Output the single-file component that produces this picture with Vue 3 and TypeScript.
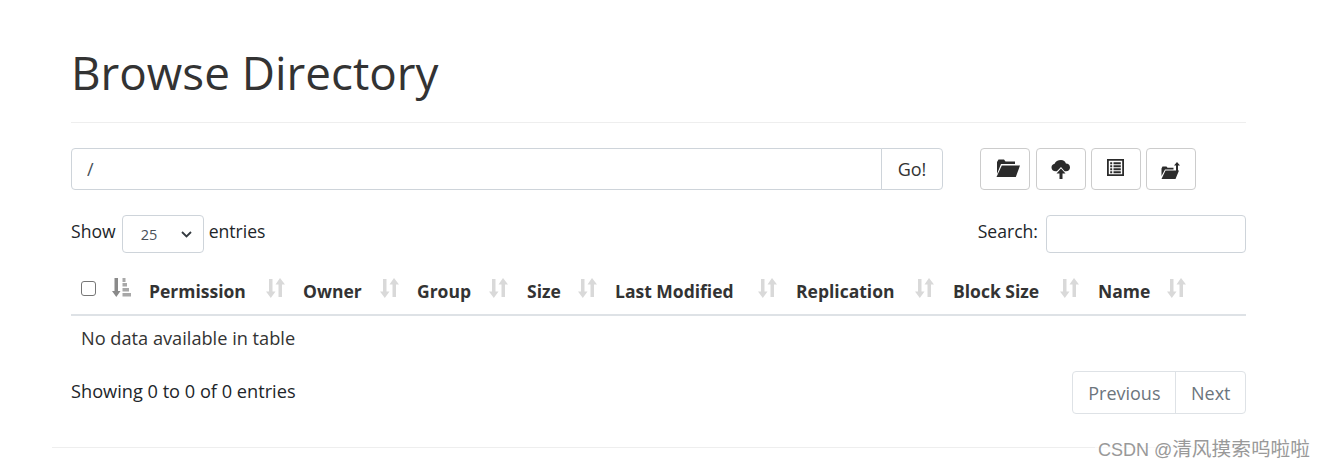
<template>
  <div class="page">
    <div class="content">
      <h1 class="title">Browse Directory</h1>
      <hr class="rule" />

      <div class="toolbar">
        <div class="path-group">
          <input class="path-input" type="text" value="/" />
          <button class="go">Go!</button>
        </div>
        <div class="actions">
          <button class="icon-btn" v-for="a in actions" :key="a.name" :title="a.name">
            <svg :class="a.cls" :width="a.w" :height="a.h" :viewBox="`0 0 ${a.w} ${a.h}`">
              <path v-for="(d, i) in a.paths" :key="i" :d="d" fill="#2b2b2b" fill-rule="evenodd" />
            </svg>
          </button>
        </div>
      </div>

      <div class="filters">
        <label class="length">
          <span>Show</span>
          <span class="select">
            <span class="select-value">25</span>
            <svg width="11" height="7" viewBox="0 0 11 7">
              <path d="M1 1l4.500 4.500L10 1" fill="none" stroke="#343a40" stroke-width="1.800" />
            </svg>
          </span>
          <span>entries</span>
        </label>
        <label class="search">
          <span>Search:</span>
          <input class="search-input" type="text" />
        </label>
      </div>

      <table class="table">
        <thead>
          <tr>
            <th class="check-col">
              <span class="checkbox"></span>
              <svg class="sort active" width="19" height="19" viewBox="0 0 19 19">
                <path d="M2.500 0h3.500v13h2.500L4.300 19 0 13h2.500z" fill="#8a8a8a" />
                <path d="M10.500 0h3v4h-3zM10.500 5h4.500v3.500h-4.500zM10.500 10h6.500v3.500h-6.500zM10.500 15h8.500v3.500h-8.500z" fill="#a8a8a8" />
              </svg>
            </th>
            <th v-for="c in columns" :key="c.label" :style="{ width: c.width ? c.width + 'px' : 'auto' }">
              <span class="th-inner">
                <span>{{ c.label }}</span>
                <svg class="sort" :style="{ marginLeft: c.gap + 'px' }" width="19" height="20" viewBox="0 0 19 20">
                  <path d="M3 1h3.500v12.500h3L4.800 20 0 13.500h3zM14 0l5 6.500h-3V19h-3.500V6.500h-3z" fill="#d9d9d9" />
                </svg>
              </span>
            </th>
          </tr>
        </thead>
        <tbody>
          <tr>
            <td class="empty" :colspan="columns.length + 1">No data available in table</td>
          </tr>
        </tbody>
      </table>

      <div class="table-foot">
        <span class="info">Showing 0 to 0 of 0 entries</span>
        <div class="pager">
          <span class="page-link">Previous</span>
          <span class="page-link">Next</span>
        </div>
      </div>
    </div>

    <hr class="bottom-rule" />
    <span class="watermark">CSDN @<span class="watermark-name">清风摸索呜啦啦</span></span>
  </div>
</template>

<script setup lang="ts">
interface Column {
  label: string
  width: number
  gap: number
}

interface Action {
  name: string
  cls: string
  w: number
  h: number
  paths: string[]
}

const columns: Column[] = [
  { label: "Permission", width: 154, gap: 20 },
  { label: "Owner", width: 114, gap: 18 },
  { label: "Group", width: 110, gap: 18 },
  { label: "Size", width: 88, gap: 17 },
  { label: "Last Modified", width: 181, gap: 24 },
  { label: "Replication", width: 157, gap: 20 },
  { label: "Block Size", width: 145, gap: 21 },
  { label: "Name", width: 0, gap: 17 }
]

const actions: Action[] = [
  {
    name: "Create directory",
    cls: "icon-folder",
    w: 24,
    h: 18,
    paths: [
      "M1 3 2.500 .5h5.500l1.500 2h9.500v2.500H5L1 15z",
      "M5.800 6.500H24L19.800 18H.5z"
    ]
  },
  {
    name: "Upload files",
    cls: "",
    w: 20,
    h: 20,
    paths: [
      "M10 1c2.600 0 4.300 1.500 4.900 3.500 2.400 0 4.100 1.700 4.100 3.900 0 2.100-1.700 3.800-3.900 3.800h-1.500L10 8 5.900 12.200H4.500C2.200 12.200.5 10.500.5 8.400c0-1.900 1.300-3.400 3.100-3.700C4.300 2.500 6.900 1 10 1z",
      "M10 9.500l4.500 5h-3V20h-3v-5.500h-3z"
    ]
  },
  {
    name: "Cut / paste",
    cls: "icon-list",
    w: 17,
    h: 17,
    paths: [
      "M0 0h17v17H0zM1.800 1.800v13.400h13.400V1.800z",
      "M3.200 3.200h2v2h-2zM6.500 3.200h7.300v2H6.500zM3.200 6.200h2v2h-2zM6.500 6.200h7.300v2H6.500zM3.200 9.200h2v2h-2zM6.500 9.200h7.300v2H6.500zM3.200 12.200h2v2h-2zM6.500 12.200h7.300v2H6.500z"
    ]
  },
  {
    name: "Parent directory",
    cls: "icon-up",
    w: 20,
    h: 17,
    paths: [
      "M.5 6.500l1-2h4l1 1.300h6v1.700H4L.5 14z",
      "M4.500 8.500h13.500L14.500 17H.5z",
      "M16 0l3 3.500h-2v6h-2v-6h-2z"
    ]
  }
]
</script>

<style>
html,
body {
  background: #fff;
}
</style>

<style scoped>
.page {
  position: relative;
  width: 1325px;
  height: 468px;
  overflow: hidden;
  font-family: "Open Sans", "Noto Sans", sans-serif;
  font-size: 18px;
  color: #212529;
  box-sizing: border-box;
}

.content {
  width: 1175px;
  margin-left: 71px;
}

.title {
  margin: 0;
  padding-top: 40px;
  font-size: 45.800px;
  line-height: 65px;
  font-weight: 400;
  color: #333;
}

.rule {
  margin: 17px 0 25px;
  border: 0;
  border-top: 1px solid #eee;
}

.toolbar {
  display: flex;
  align-items: flex-start;
}

.path-group {
  display: flex;
  width: 872px;
  height: 42px;
}

.path-input {
  flex: 1;
  min-width: 0;
  box-sizing: border-box;
  padding: 0 15px;
  border: 1px solid #ced4da;
  border-radius: 4px 0 0 4px;
  font: inherit;
  color: #495057;
  outline: none;
}

.go {
  width: 62px;
  margin-left: -1px;
  border: 1px solid #ced4da;
  border-radius: 0 4px 4px 0;
  background: #fff;
  font: inherit;
  color: #333;
}

.actions {
  display: flex;
  gap: 5.400px;
  margin-left: 37.200px;
}

.icon-btn {
  display: flex;
  align-items: center;
  justify-content: center;
  width: 50px;
  height: 42px;
  padding: 0;
  border: 1px solid #ccc;
  border-radius: 4px;
  background: #fff;
}

.icon-folder {
  margin: -2px 0 0 6px;
}

.icon-list {
  margin-top: -3px;
}

.icon-up {
  margin-top: 2px;
}

.filters {
  display: flex;
  justify-content: space-between;
  align-items: flex-start;
  margin-top: 25px;
}

.length,
.search {
  display: flex;
  align-items: flex-start;
  font-size: 17.600px;
  line-height: 33px;
  white-space: nowrap;
}

.select {
  display: flex;
  align-items: center;
  justify-content: space-between;
  box-sizing: border-box;
  width: 82px;
  height: 38px;
  margin: 0 5px 0 6px;
  padding: 0 11px 0 18px;
  border: 1px solid #ced4da;
  border-radius: 4px;
}

.select-value {
  font-size: 14.500px;
  color: #495057;
  line-height: 38px;
  padding-top: 2px;
}

.search-input {
  box-sizing: border-box;
  width: 200px;
  height: 38px;
  margin-left: 8px;
  border: 1px solid #ced4da;
  border-radius: 4px;
  outline: none;
}

.table {
  width: 1175px;
  margin-top: 5px;
  border-collapse: collapse;
  table-layout: fixed;
}

th {
  height: 56px;
  padding: 0;
  border-bottom: 2px solid #dee2e6;
  text-align: left;
  font-weight: 700;
  font-size: 17.500px;
  color: #333;
  white-space: nowrap;
}

.check-col {
  width: 78px;
}

.check-col > * {
  vertical-align: middle;
}

.checkbox {
  display: inline-block;
  box-sizing: border-box;
  width: 15px;
  height: 15px;
  margin: 0 0 0 10px;
  border: 1px solid #767676;
  border-radius: 3px;
  background: #fff;
}

.sort.active {
  margin: -2px 0 0 16px;
}

.th-inner {
  display: flex;
  align-items: center;
  position: relative;
  top: 5px;
}

.th-inner .sort {
  position: relative;
  top: -3px;
}

.empty {
  height: 44px;
  padding: 0 10px;
  border: 0;
  font-size: 18.200px;
  color: #333;
}

.table-foot {
  display: flex;
  justify-content: space-between;
  align-items: flex-start;
  margin-top: 11px;
}

.info {
  padding-top: 4px;
  font-size: 18.200px;
  line-height: 33px;
}

.pager {
  display: flex;
  height: 43px;
  border: 1px solid #dee2e6;
  border-radius: 4px;
  box-sizing: border-box;
  color: #6c757d;
}

.page-link {
  display: flex;
  align-items: center;
  padding: 0 14px 0 15px;
}

.page-link + .page-link {
  padding: 0 14.500px 0 15.500px;
  border-left: 1px solid #dee2e6;
}

.bottom-rule {
  margin: 33px 60px 0 52px;
  border: 0;
  border-top: 1px solid #eee;
}

.watermark {
  position: absolute;
  top: 436px;
  right: 15px;
  padding-left: 3px;
  font-family: "Liberation Sans", "Noto Sans CJK SC", sans-serif;
  font-size: 18px;
  line-height: 26px;
  color: #999;
  background: rgba(255, 255, 255, 0.6);
}

.watermark-name {
  font-size: 19.700px;
}
</style>
